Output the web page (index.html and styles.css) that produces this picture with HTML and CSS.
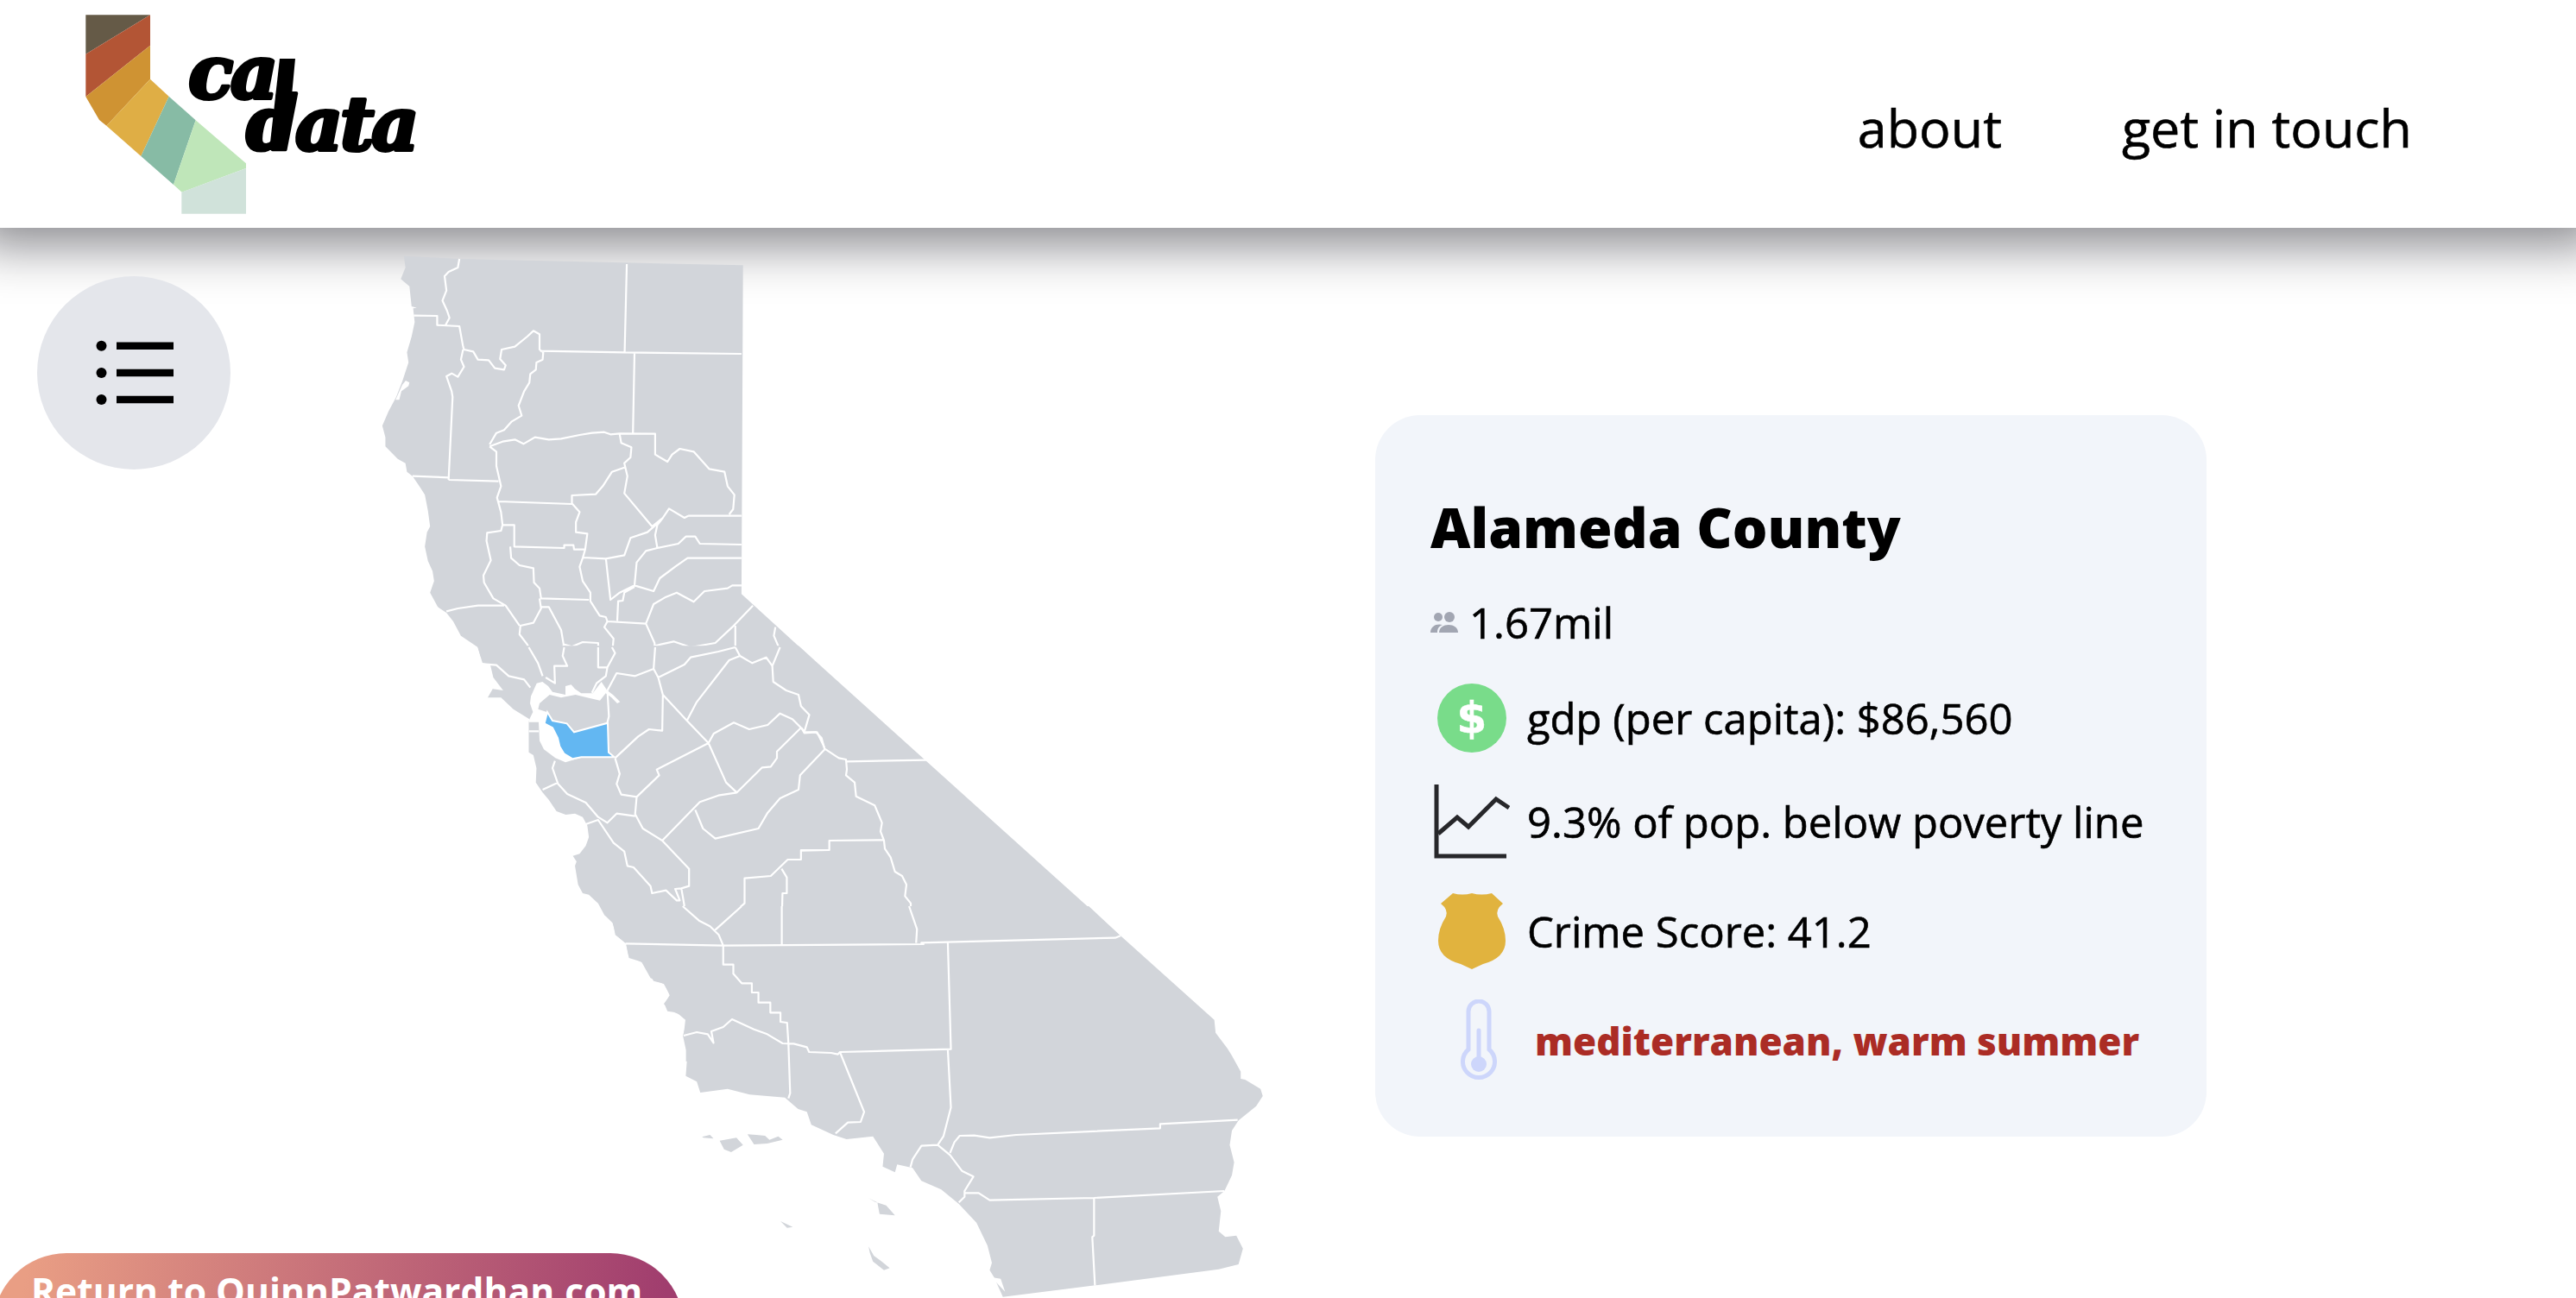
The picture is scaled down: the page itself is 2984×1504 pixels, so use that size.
FILE: index.html
```html
<!DOCTYPE html>
<html lang="en">
<head>
    <meta charset="UTF-8">
    <meta name="viewport" content="width=device-width, initial-scale=1.0">
    <title>cal data</title>
    <link rel="stylesheet" href="styles.css">
</head>
<body>
    <header class="site-header">
        <a class="logo" href="#">
            <svg class="logo-art" viewBox="0 0 480 264" width="480" height="264">
                <g transform="scale(.33333)">
                    <polygon fill="#655a47" points="118,52 342,52 118,188"/>
                    <polygon fill="#b35535" points="342,52 342,158 118,336 118,188"/>
                    <polygon fill="#cf9333" points="342,158 342,275 190,437 165,417 118,336"/>
                    <polygon fill="#dfae45" points="342,275 407,335 310,543 190,437"/>
                    <polygon fill="#87bba5" points="407,335 500,418 423,642 310,543"/>
                    <polygon fill="#bfe6b9" points="500,418 675,568 675,585 452,668 423,642"/>
                    <polygon fill="#d0e2da" points="675,585 675,743 451,743 451,668"/>
                </g>
                <text class="logo-word" x="158" y="114">ca</text>
                <polygon class="logo-stem" points="264,68 282,68 272,174 252,174"/>
                <text class="logo-word" x="225" y="174">data</text>
            </svg>
        </a>
        <nav class="site-nav">
            <a href="#">about</a>
            <a href="#">get in touch</a>
        </nav>
    </header>

    <!-- county map, drawn in the page's own coordinates -->
    <svg class="map" viewBox="0 0 2984 1504" width="2984" height="1504">
        <g transform="translate(400 280) scale(.35714 .33333)">
            <path class="land" d="M190 50 L370 60 L1290 82 L1285 1225 L1505 1440 L1505 1445 L440 1445 L430 1410 L375 1370 L350 1320 L328 1290 L300 1270 L275 1220 L288 1180 L283 1145 L268 1110 L258 1060 L265 1010 L275 990 L268 935 L258 880 L240 850 L218 815 L200 800 L195 770 L170 755 L130 712 L130 680 L120 640 L140 590 L165 540 L185 485 L205 420 L200 385 L215 330 L225 280 L220 232 L232 230 L215 225 L208 155 L180 130 L195 90 Z"/>
            <path class="water" d="M163 550 L175 550 L182 520 L205 502 L208 490 L196 483 L185 497 Z"/>
            <path class="border" d="M370 60 L365 90 L335 105 L322 120 L328 170 L315 205 L330 240 L338 265 L325 290
                M222 257 L298 258 L298 290 L370 294 L382 365
                M382 365 L385 375 L415 382 L430 410 L465 412 L485 440 L515 445 L520 430 L502 408 L507 375 L550 365 L590 330 L610 310 L630 322 L630 375 L642 385 L640 410 L620 420 L618 445 L600 460 L597 490 L580 520 L562 570 L572 605 L540 625 L515 655 L490 665 L468 705
                M913 78 L906 385 M632 380 L906 385 L1285 390 M938 388 L933 665
                M382 375 L375 410 L385 435 L365 470 L345 458 L328 468 L345 520 L348 540 L335 828
                M218 815 L335 820 M335 828 L497 833
                M468 712 L510 695 L550 688 L578 703 L615 680 L660 688 L700 685 L760 672 L800 665 L840 662 L860 670 L890 667 L1005 668 L1005 740 L1045 765 L1060 740 L1085 720 L1130 730 L1180 790 L1230 800 L1240 850 L1262 880 L1258 930 L1245 948
                M1112 953 L1285 953
                M468 712 L490 730 L490 780 L505 850 L492 890 L505 940 L510 985
                M497 903 L735 912
                M890 670 L895 700 L928 715 L925 750 L905 770 L915 815 L905 875 L995 990
                M905 785 L865 800 L835 850 L812 878 L735 882 L735 910 L760 940 L748 975 L748 1010 L785 1015 L778 1070 L770 1100 L760 1130 L770 1180 L795 1220 L795 1250 L825 1300 L845 1305 L850 1320
                M995 990 L1030 960 L1050 928 L1100 960 L1112 953
                M1030 960 L1012 985 L1005 1020 L1012 1065 L975 1075 L945 1115 L938 1195 L890 1220 L860 1245 L845 1100
                M772 1098 L845 1102 L905 1090 L925 1030 L980 1010 L1012 980
                M1012 1065 L1080 1050 L1105 1025 L1135 1025 L1150 1050 L1285 1053
                M938 1195 L1000 1215 L1020 1170 L1070 1130 L1110 1100 L1285 1100
                M938 1200 L905 1220 L900 1248 L885 1250 L882 1318
                M850 1320 L975 1328 L1000 1260 L1040 1235 L1075 1220 L1130 1252 L1165 1215 L1240 1205 L1255 1195 L1285 1195
                M510 985 L548 985 L548 1060 L710 1065 L710 1055 L740 1055 L742 1070 L775 1070
                M510 985 L505 1005 L460 1012 L458 1040 L472 1108 L448 1160 L450 1185 L480 1240 L520 1265 L565 1335
                M535 1060 L538 1100 L565 1125 L610 1135 L612 1185 L630 1205 L635 1240 L790 1245
                M630 1240 L635 1275 L610 1325 L568 1335 L565 1365 L590 1400 L610 1440
                M328 1285 L365 1275 L430 1265 L515 1265
                M635 1270 L660 1270 L700 1350 L708 1400 L705 1440
                M850 1320 L840 1340 L870 1380 L865 1440
                M975 1328 L1003 1395 L1005 1440
                M1003 1405 L1065 1390 L1120 1410 L1200 1395 L1255 1340 L1322 1265
                M1265 1335 L1265 1410 M1395 1340 L1390 1370 L1410 1420 L1405 1440
                M708 1400 L735 1408 L770 1392 L820 1395 L822 1440
                M1140 1435 L1210 1420 L1265 1410"/>
        </g>
        <g transform="translate(400 750) scale(.35714 .33333)">
            <path class="land" d="M428 -5 L1470 -5 L2512 1002 L1105 1440 L1105 1400 L1095 1350 L1108 1300 L1075 1270 L1045 1265 L1035 1240 L1052 1210 L1035 1170 L1000 1160 L965 1095 L920 1080 L910 1030 L878 1000 L865 950 L840 930 L820 890 L790 860 L770 855 L755 825 L745 760 L750 745 L738 725 L760 718 L780 690 L790 660 L785 620 L770 590 L745 578 L715 582 L685 570 L660 530 L640 505 L618 470 L620 420 L610 375 L595 365 L595 262 L597 250 L545 215 L505 175 L462 175 L478 145 L512 150 L480 105 L470 60 L445 55 Z"/>
            <path class="border" d="M445 58 L490 62 L530 100 L580 112 L600 140
                M595 0 L625 55 L640 100 M650 105 L680 125 L678 65 L720 65 L705 30 L710 0
                M820 0 L820 70 L850 70 L875 20 L865 0 M850 70 L845 100 L815 125 L800 158
                M850 150 L880 90 L940 100 L1000 75 L1005 0
                M1000 75 L1015 105 L1100 60 L1120 35 L1210 15 L1265 0
                M1030 165 L1028 290 L985 285 L950 310 L875 385
                M850 150 L855 240 L850 262
                M1015 105 L1030 165 L1108 255 L1178 333 L1010 425 L1018 445 L945 520
                M1108 255 L1140 190 L1245 45 L1280 30 L1320 55 L1365 35 L1385 65 L1388 120 L1430 150 L1470 165 L1478 205 L1505 235 L1490 290
                M1265 0 L1280 30 M1410 0 L1385 65
                M1178 333 L1195 300 L1260 262 L1310 285 L1370 270 L1410 230 L1450 250 L1478 280 L1490 295 L1530 295 L1555 350
                M1478 280 L1400 362 L1400 385 L1380 415 L1352 418 L1270 505 L1235 470 L1178 333
                M1270 505 L1210 515 L1150 538 L1028 672
                M1135 565 L1160 630 L1200 665 L1340 630 L1370 575 L1410 525 L1470 495 L1475 445 L1555 355
                M875 385 L890 440 L880 475 L895 512 L945 520 L940 580 L965 630 L1028 672 L1115 770 L1115 830 L1090 838 L1100 900 L1125 940 L1190 985 L1220 1030
                M680 395 L672 420 L690 475 L720 510 L780 540 L820 590 L850 610 L880 578 L940 587
                M690 470 L640 495
                M780 615 L820 600 L870 680 L905 710 L915 760 L935 765 L990 830 L995 855 L1040 845 L1075 880 L1085 880 L1070 840 L1090 838
                M1195 985 L1295 890 L1295 803 L1380 795 L1435 738 L1478 738 L1478 705 L1568 705
                M1415 770 L1432 800 L1432 855 L1418 855 L1414 1036
                M910 1030 L1225 1038 L1568 1036"/>
        </g>
        <g transform="translate(900 790) scale(.33333)">
            <path class="border" d="M85 160 L95 178 L135 175 L155 195 L165 232 L215 265 L240 270 L243 305 L240 325 L270 350 L275 398 L340 430 L365 490 L360 520 L372 552 L375 580 L395 610 L410 660 L435 675 L450 705 L445 745 L465 770 L465 820 L488 860 L482 910
                M243 277 L520 272
                M372 550 L182 552 L182 585 L85 587"/>
        </g>
        <g transform="translate(700 1050) scale(.5102 .33333)">
            <path class="land" d="M0 0 L0 30 L20 60 L25 100 L50 130 L55 170 L85 195 L105 250 L135 270 L150 310 L135 340 L160 370 L185 385 L180 450 L190 490 L185 590 L210 610 L218 648 L280 635 L330 655 L410 665 L440 705 L460 715 L470 760 L520 795 L550 810 L610 800 L635 860 L632 905 L660 925 L665 898 L700 910 L720 955 L765 985 L805 1035 L845 1100 L870 1180 L880 1240 L875 1265 L885 1290 L905 1358 L1115 1318 L1395 1262 L1440 1245 L1450 1190 L1435 1145 L1410 1150 L1395 1130 L1400 1060 L1392 1010 L1408 990 L1425 935 L1430 890 L1420 830 L1425 780 L1440 745 L1480 695 L1495 660 L1490 635 L1455 603 L1445 600 L1445 575 L1425 520 L1415 495 L1388 440 L1385 395 L1170 100 L1100 0 Z"/>
            <path class="land" d="M222 802 L240 795 L248 808 L225 805 Z M262 815 L300 805 L315 830 L288 855 L272 845 Z M325 793 L345 795 L365 798 L375 812 L395 800 L405 812 L370 825 L340 828 Z M600 1015 L615 1028 L640 1040 L660 1075 L625 1070 L620 1030 Z M400 1095 L428 1115 L415 1118 Z M600 1183 L612 1215 L630 1235 L648 1258 L635 1265 L610 1235 L603 1205 Z"/>
            <path class="water" d="M880 1290 L900 1295 L910 1340 L885 1300 Z"/>
            <path class="border" d="M48 130 L270 137 L725 132 L720 127 L1160 110 L1172 103
                M178 0 L215 50 L240 70 L260 100 L270 137 M250 85 L312 0 M403 0 L403 135 M692 0 L710 80 L708 128
                M270 137 L270 203 L293 203 L293 235 L312 268 L335 268 L335 300 L350 300 L350 335 L377 335 L377 370 L400 370 L400 402 L415 405 L418 475
                M180 450 L210 438 L235 445 L248 475 L243 435 L270 420 L290 393 L340 428 L370 445 L405 477 L430 478 L460 490 L465 507 L515 510 L530 515 L535 507 L787 497 L780 128
                M418 475 L422 650 L418 668
                M535 507 L590 715 L582 750 L553 752 L525 790
                M780 500 L787 700 L770 800 L757 830 L720 833 L700 880 L695 908
                M757 830 L785 865 L812 920 L838 940 L818 990 L818 1010 L805 1030
                M785 858 L795 820 L807 798 L840 797 L875 805 L935 795 L1262 772 L1262 757 L1438 743
                M818 997 L850 997 L875 1022 L1112 1014 L1408 990
                M1112 1014 L1112 1145 L1108 1150 L1114 1318"/>
        </g>
        <!-- bay area and the selected county -->
        <g transform="translate(540 740) scale(.33333)">
            <path class="water" d="M220 280 L232 255 L222 225 L225 200 L245 155 L265 150 L285 165 L300 185 L345 195 L345 165 L365 160 L378 175 L400 190 L440 190 L470 150 L490 180 L510 195 L535 220 L525 225 L505 205 L485 190 L465 215 L420 205 L380 195 L330 205 L290 195 L255 225 L250 245 L280 255 L272 295 L300 310 L318 345 L325 375 L345 405 L375 418 L405 412 L345 430 L310 415 L270 385 L255 355 L252 290 L218 290 Z"/>
            <path class="border" d="M218 322 L252 322"/>
            <path class="county-active" d="M282 255 L300 285 L350 295 L375 325 L492 293 L495 395 L515 412 L400 412 L370 418 L340 400 L325 375 L318 345 L300 310 L272 295 Z"/>
        </g>
    </svg>

    <button class="menu-btn" aria-label="menu">
        <svg viewBox="0 0 100 80" width="100" height="80">
            <circle cx="12.5" cy="8.7" r="6"/>
            <circle cx="12.5" cy="40" r="6"/>
            <circle cx="12.5" cy="71" r="6"/>
            <path class="menu-lines" d="M30 8.7 H96 M30 40 H96 M30 71 H96"/>
        </svg>
    </button>

    <main class="content">
        <section class="card">
            <h2 class="card-title">Alameda County</h2>
            <div class="stat stat-pop">
                <svg class="icon-people" viewBox="0 0 32 24" width="32" height="24">
                    <circle cx="9" cy="6" r="5"/>
                    <circle cx="22" cy="6" r="6"/>
                    <path d="M0 24 C0 16 8 13 14 15 C9 17 8 20 8 24 Z"/>
                    <path d="M10 24 C10 12 32 12 32 24 Z"/>
                </svg>
                <span>1.67mil</span>
            </div>
            <div class="stat stat-gdp">
                <span class="icon-box"><span class="icon-dollar">$</span></span>
                <span>gdp (per capita): $86,560</span>
            </div>
            <div class="stat">
                <span class="icon-box">
                    <svg class="icon-chart" viewBox="0 0 88 86" width="88" height="86">
                        <path d="M3 0 V83 H84"/>
                        <path d="M5 57 L27 38 L40 49 L72 17 L87 27"/>
                    </svg>
                </span>
                <span>9.3% of pop. below poverty line</span>
            </div>
            <div class="stat">
                <span class="icon-box">
                    <svg viewBox="0 0 78 89" width="78" height="89">
                        <path class="icon-shield" d="M3 13 L17 1 Q28 4 39 1 Q50 4 62 1 L75 13 Q66 20 69 28 Q78 42 78 56 Q78 76 52 83 L39 89 L26 83 Q0 76 0 56 Q0 42 9 28 Q12 20 3 13 Z"/>
                    </svg>
                </span>
                <span>Crime Score: 41.2</span>
            </div>
            <div class="stat stat-climate">
                <span class="icon-box icon-box-thermo">
                    <svg class="icon-thermo" viewBox="0 0 42 96" width="42" height="96">
                        <path d="M9 58 V14 A12 12 0 0 1 33 14 V58 A18.5 18.5 0 1 1 9 58 Z"/>
                        <path d="M21 36 V72"/>
                        <circle cx="21" cy="75" r="9"/>
                    </svg>
                </span>
                <span>mediterranean, warm summer</span>
            </div>
        </section>
    </main>

    <a class="return-link" href="#">Return to QuinnPatwardhan.com</a>
</body>
</html>
```

FILE: styles.css
```css
html, body {
    height: 1504px;
    margin: 0;
    overflow: hidden;
}

body {
    position: relative;
    font-family: "Open Sans", Arial, sans-serif;
    background-color: #fff;
    color: #000;
}

a {
    color: inherit;
    text-decoration: none;
}

/* header */
.site-header {
    position: relative;
    z-index: 1;
    display: flex;
    align-items: flex-start;
    justify-content: space-between;
    height: 264px;
    padding: 0 190px 0 60px;
    background-color: #fff;
    box-shadow: 0 -10px 56px 30px rgba(5, 5, 15, .48);
}

.logo-art {
    display: block;
}

.logo-word {
    font-family: "DejaVu Serif", serif;
    font-size: 86px;
    font-weight: 700;
    font-style: italic;
    letter-spacing: -3.5px;
    stroke: #000;
    stroke-width: 4px;
    stroke-linejoin: round;
}

.logo-stem {
    fill: #000;
}

.site-nav {
    display: flex;
    gap: 139px;
    padding-top: 107px;
    font-size: 61px;
    font-weight: 500;
    line-height: 82px;
    -webkit-text-stroke: .6px #000;
}

/* map */
.map {
    position: absolute;
    top: 0;
    left: 0;
    z-index: 2;
    pointer-events: none;
}

.land {
    fill: #d2d5da;
}

.water {
    fill: #fff;
}

.county-active {
    fill: #63b7f2;
    stroke: #fff;
    stroke-width: 2px;
    vector-effect: non-scaling-stroke;
}

.border {
    fill: none;
    stroke: #fff;
    stroke-width: 2.2px;
    stroke-linejoin: round;
    vector-effect: non-scaling-stroke;
}

/* menu button */
.menu-btn {
    position: absolute;
    top: 320px;
    left: 43px;
    z-index: 3;
    display: flex;
    align-items: center;
    justify-content: center;
    width: 224px;
    height: 224px;
    padding: 0;
    border: none;
    border-radius: 50%;
    background-color: #e4e6eb;
}

.menu-lines {
    fill: none;
    stroke: #000;
    stroke-width: 8.5px;
}

/* info card */
.content {
    display: flex;
    padding: 217px 0 0 1593px;
}

.card {
    box-sizing: border-box;
    width: 963px;
    padding: 85px 0 48px 64px;
    border-radius: 52px;
    background-color: #f2f5fa;
}

.card-title {
    margin: 0 0 10px;
    font-size: 64px;
    font-weight: 800;
    line-height: 90px;
}

.stat {
    display: flex;
    align-items: center;
    gap: 20px;
    height: 127px;
    font-size: 49px;
    font-weight: 500;
    -webkit-text-stroke: .6px currentColor;
}

.stat-pop {
    height: 109px;
    gap: 13px;
}

.stat-gdp {
    height: 113px;
}

.icon-box {
    display: flex;
    flex-shrink: 0;
    align-items: center;
    justify-content: center;
    width: 88px;
    height: 100%;
    margin-left: 4px;
}

.icon-people {
    fill: #a2a6b2;
}

.icon-dollar {
    display: flex;
    align-items: center;
    justify-content: center;
    width: 80px;
    height: 80px;
    border-radius: 50%;
    background-color: #79dc8a;
    color: #fff;
    font-family: "DejaVu Sans", sans-serif;
    font-size: 50px;
    font-weight: 700;
}

.icon-chart path {
    fill: none;
    stroke: #27272a;
    stroke-width: 5px;
}

.icon-shield {
    fill: #e1b33e;
}

.icon-thermo path {
    fill: none;
    stroke: #cdd6fb;
    stroke-width: 5px;
    stroke-linecap: round;
}

.icon-thermo circle {
    fill: #cdd6fb;
}

.stat-climate {
    gap: 26px;
    color: #ab2c25;
    font-size: 44px;
    font-weight: 800;
    -webkit-text-stroke: 0;
}

.icon-box-thermo {
    width: 78px;
    margin-left: 17px;
}

/* return link */
.return-link {
    position: absolute;
    top: 1452px;
    left: -8px;
    z-index: 3;
    box-sizing: border-box;
    width: 800px;
    height: 170px;
    padding: 12px 0 0 44px;
    border-radius: 85px;
    background: linear-gradient(100deg, #e99e84 5%, #a03d6e 95%);
    color: #fff;
    font-size: 42.6px;
    font-weight: 700;
    line-height: 62px;
    white-space: nowrap;
}
```
